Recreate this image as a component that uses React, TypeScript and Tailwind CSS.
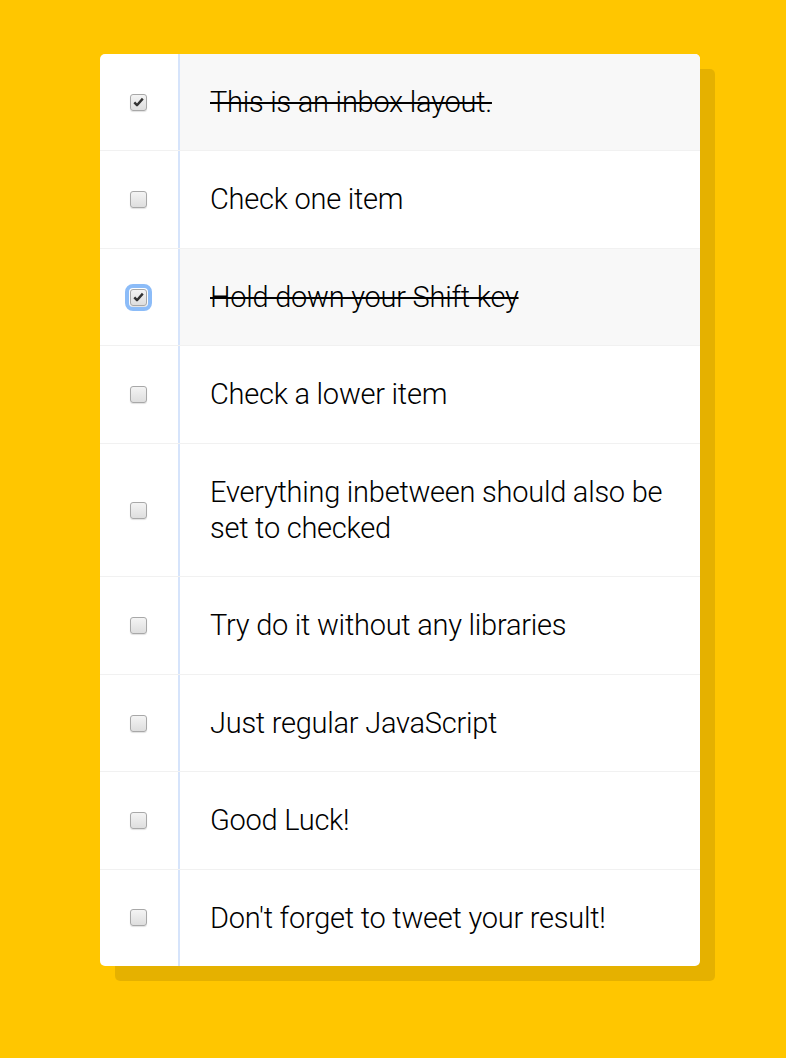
import React from "react";

const items = [
  { text: "This is an inbox layout.", checked: true },
  { text: "Check one item", checked: false },
  { text: "Hold down your Shift key", checked: true, focused: true },
  { text: "Check a lower item", checked: false },
  { text: "Everything inbetween should also be set to checked", checked: false },
  { text: "Try do it without any libraries", checked: false },
  { text: "Just regular JavaScript", checked: false },
  { text: "Good Luck!", checked: false },
  { text: "Don't forget to tweet your result!", checked: false },
];

function Box({ checked, focused }: { checked: boolean; focused?: boolean }) {
  return (
    <span
      className={
        "flex h-[17px] w-[17px] items-center justify-center rounded-[3px] border border-[#a8a8a8] bg-gradient-to-b from-[#f4f4f4] to-[#dedede] shadow-[0_1px_1px_rgba(0,0,0,0.12)] " +
        (focused ? "outline-[4px] outline-solid outline-[#8cbcf8] outline-offset-[1px]" : "")
      }
    >
      {checked && (
        <svg width="11" height="10" viewBox="0 0 11 10">
          <path d="M1.3 5.4 L4 8.2 L9.8 1.6" fill="none" stroke="#333" strokeWidth="2.4" strokeLinejoin="round" />
        </svg>
      )}
    </span>
  );
}

export default function App() {
  return (
    <div className="min-h-[1058px] w-full bg-[#ffc600] pt-[54px] pl-[100px]" style={{ fontFamily: "Roboto, 'Liberation Sans', sans-serif" }}>
      <div className="w-[600px] overflow-hidden rounded-[5px] bg-white shadow-[15px_15px_0_rgba(0,0,0,0.1)]">
        {items.map((item, i) => (
          <div
            key={i}
            className={"flex items-center " + (i < items.length - 1 ? "border-b border-[#f1f1f1]" : "")}
          >
            <div className="flex w-[78px] shrink-0 justify-start pl-[30px]">
              <Box checked={item.checked} focused={item.focused} />
            </div>
            <p
              className={
                "flex-1 self-stretch border-l-2 border-[#d6e4fb] p-[30px] text-[29px] leading-[36.4px] tracking-[-0.25px] font-light text-black " +
                (item.checked ? "bg-[#f8f8f8] line-through" : "")
              }
            >
              {item.text}
            </p>
          </div>
        ))}
      </div>
    </div>
  );
}
